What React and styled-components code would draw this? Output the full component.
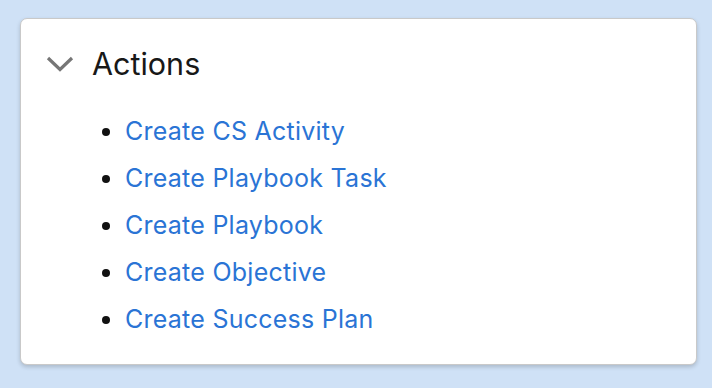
import React from "react";
import styled, { createGlobalStyle } from "styled-components";

const Global = createGlobalStyle`
  html, body { margin: 0; padding: 0; }
  body {
    background: #cfe1f6;
    font-family: Inter, "Liberation Sans", Arial, sans-serif;
    -webkit-font-smoothing: antialiased;
  }
`;

const Page = styled.div`
  padding: 18px 15px 0 20px;
  height: 388px;
  box-sizing: border-box;
`;

const Card = styled.section`
  background: #fff;
  border: 1px solid #c9c9c9;
  border-radius: 7px;
  box-shadow: 0 2px 4px rgba(0, 0, 0, 0.18);
  height: 347px;
  box-sizing: border-box;
  padding: 23px 0 0 25px;
`;

const Header = styled.div`
  display: flex;
  align-items: center;
  gap: 18px;
  height: 42px;
`;

const Chevron = styled.svg`
  width: 28px;
  height: 16px;
  flex: none;
  margin-top: 2px;
`;

const Title = styled.h2`
  margin: 0;
  font-size: 30.5px;
  font-weight: 400;
  color: #181818;
  letter-spacing: 0;
`;

const List = styled.ul`
  margin: 24px 0 0;
  padding: 0 0 0 79px;
  list-style: disc;
  color: #111;
`;

const Item = styled.li`
  font-size: 25px;
  line-height: 47px;
  letter-spacing: 0.25px;
  &::marker { font-size: 25px; letter-spacing: 0; }
`;

const Link = styled.a`
  color: #2a74d5;
  text-decoration: none;
`;

const actions = [
  "Create CS Activity",
  "Create Playbook Task",
  "Create Playbook",
  "Create Objective",
  "Create Success Plan",
];

export default function App() {
  return (
    <>
      <Global />
      <Page>
        <Card>
          <Header>
            <Chevron viewBox="0 0 28 16" fill="none">
              <path d="M2 2 L14 13.5 L26 2" stroke="#767676" strokeWidth="3.2" strokeLinecap="butt" strokeLinejoin="miter" />
            </Chevron>
            <Title>Actions</Title>
          </Header>
          <List>
            {actions.map((a) => (
              <Item key={a}>
                <Link href="#">{a}</Link>
              </Item>
            ))}
          </List>
        </Card>
      </Page>
    </>
  );
}
